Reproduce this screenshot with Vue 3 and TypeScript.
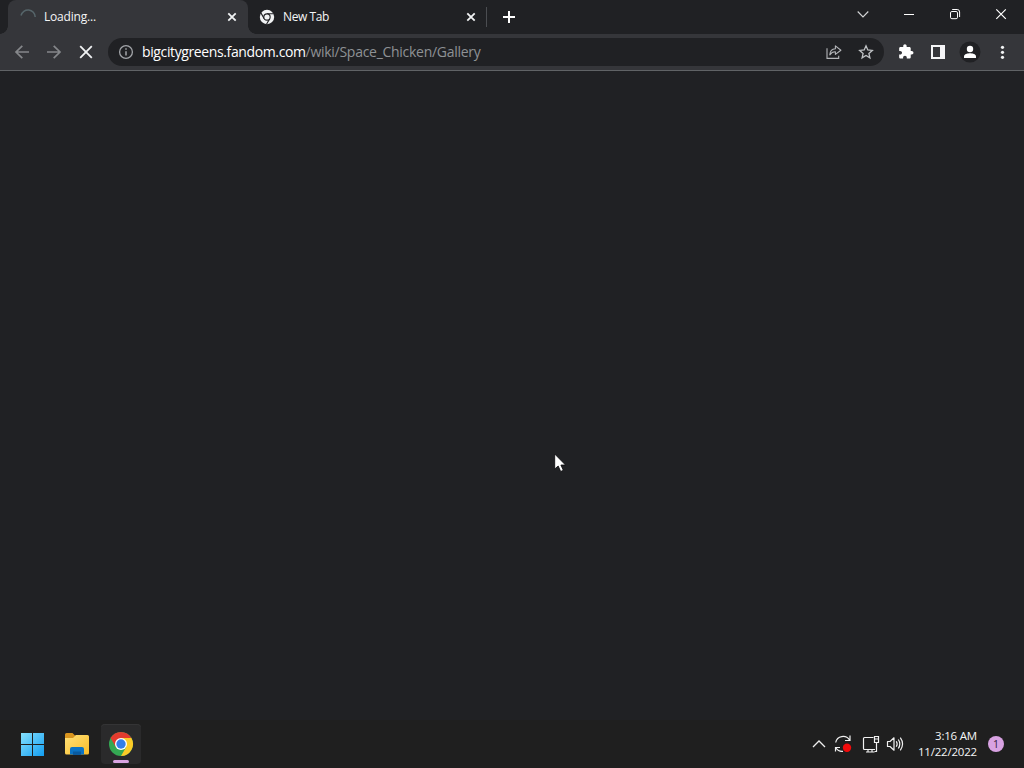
<script setup lang="ts">
import { ref } from 'vue'

interface Tab {
  title: string
  loading: boolean
}

const tabs = ref<Tab[]>([
  { title: 'Loading...', loading: true },
  { title: 'New Tab', loading: false },
])
const host = 'bigcitygreens.fandom.com'
const path = '/wiki/Space_Chicken/Gallery'
const time = '3:16 AM'
const date = '11/22/2022'
const notifications = 1
</script>

<template>
  <div class="screen">
    <header class="strip">
      <div v-for="tab in tabs" :key="tab.title" class="tab" :class="{ active: tab.loading }">
        <svg v-if="tab.loading" class="favicon" width="16" height="16" viewBox="0 0 16 16">
          <path d="M1 6.5A7.2 7.2 0 0 1 15.2 8" fill="none" stroke="#56656a" stroke-width="1.5" />
        </svg>
        <svg v-else class="favicon" width="16" height="16" viewBox="0 0 16 16">
          <circle cx="8" cy="8" r="7.2" fill="#f1f3f4" />
          <circle cx="8" cy="8" r="3.7" fill="#202124" />
          <path d="M8 4.8H14.6M5.2 9.6L1.9 3.9M10.8 9.6L7.5 15.3" stroke="#202124" stroke-width="1.1" />
          <circle cx="8" cy="8" r="2.6" fill="#f1f3f4" />
        </svg>
        <span class="title">{{ tab.title }}</span>
        <svg class="close" width="16" height="16" viewBox="0 0 16 16">
          <path d="M4.3 4.3L11.7 11.7M11.7 4.3L4.3 11.7" stroke="#f1f3f4" stroke-width="1.8" />
        </svg>
      </div>
      <div class="divider"></div>
      <svg class="plus" width="16" height="16" viewBox="0 0 16 16">
        <path d="M8 2V14M2 8H14" stroke="#fff" stroke-width="2" />
      </svg>
      <div class="window-buttons">
        <svg width="46" height="28" viewBox="0 0 46 28"><path d="M17.7 11.5L23 17L28.3 11.5" fill="none" stroke="#d4d5d7" stroke-width="1.1" /></svg>
        <svg width="46" height="28" viewBox="0 0 46 28"><path d="M18 14.5H28" stroke="#fff" /></svg>
        <svg width="46" height="28" viewBox="0 0 46 28" fill="none" stroke="#fff">
          <rect x="18.500" y="11.500" width="7" height="7.200" rx="1.400" />
          <path d="M20.200 9.500H25.200Q27.600 9.500 27.600 12V17" />
        </svg>
        <svg width="46" height="28" viewBox="0 0 46 28"><path d="M18.300 9.300L27.800 18.800M27.800 9.300L18.300 18.800" stroke="#fff" stroke-width="1.200" /></svg>
      </div>
    </header>

    <nav class="toolbar">
      <svg class="nav-icon" viewBox="0 0 32 32"><path d="M29 16H16M22.300 9.800L16 16L22.300 22.200" fill="none" stroke="#85878a" stroke-width="1.700" /></svg>
      <svg class="nav-icon" viewBox="0 0 32 32"><path d="M15 16H28M21.700 9.800L28 16L21.700 22.200" fill="none" stroke="#85878a" stroke-width="1.700" /></svg>
      <svg class="nav-icon" viewBox="0 0 32 32"><path d="M16.200 10.200L27.800 21.800M27.800 10.200L16.200 21.800" stroke="#f1f3f4" stroke-width="1.800" /></svg>
      <div class="address">
        <svg class="info" width="16" height="16" viewBox="0 0 16 16">
          <circle cx="8" cy="8" r="6.400" fill="none" stroke="#a2a5a9" stroke-width="1.300" />
          <path d="M8 7.200V11.500M8 4.300V5.800" stroke="#a2a5a9" stroke-width="1.500" />
        </svg>
        <span class="url"><span class="host">{{ host }}</span><span class="path">{{ path }}</span></span>
        <svg class="share" width="16" height="16" viewBox="0 0 16 16" fill="none" stroke="#b4b6b9" stroke-width="1.100">
          <path d="M1 4.300V14.400H12.700V11.700" />
          <path d="M3.800 10.900C4 6.900 6 4.900 9.400 4.700V1.900L14.900 6.200L9.400 10.400V7.700C6.900 7.600 5.200 8.700 3.800 10.900Z" stroke-linejoin="round" />
        </svg>
        <svg class="star" width="16" height="16" viewBox="0 0 16 16">
          <path d="M8 1.800L9.800 6L14.300 6.400L10.900 9.400L11.900 13.900L8 11.500L4.100 13.900L5.100 9.400L1.700 6.400L6.200 6Z" fill="none" stroke="#c0c3c6" stroke-width="1.300" />
        </svg>
      </div>
      <div class="actions">
        <svg width="32" height="32" viewBox="0 0 32 32">
          <path transform="translate(7.8 7.6) scale(.68)" fill="#fff" d="M20.5 11H19V7c0-1.100-.9-2-2-2h-4V3.500C13 2.120 11.880 1 10.500 1S8 2.120 8 3.500V5H4c-1.100 0-1.990.9-1.990 2v3.800H3.500c1.490 0 2.700 1.210 2.700 2.700s-1.210 2.700-2.700 2.700H2V20c0 1.100.9 2 2 2h3.800v-1.500c0-1.490 1.210-2.700 2.700-2.700s2.700 1.210 2.700 2.700V22H17c1.100 0 2-.9 2-2v-4h1.500c1.380 0 2.500-1.120 2.500-2.500S21.880 11 20.500 11z" />
        </svg>
        <svg width="32" height="32" viewBox="0 0 32 32"><path d="M9 9H23V23H9ZM11 11V21H18V11Z" fill="#f5f5f7" fill-rule="evenodd" /></svg>
        <svg width="32" height="32" viewBox="0 0 32 32">
          <circle cx="16" cy="16" r="10.500" fill="#202124" />
          <circle cx="16" cy="13" r="3.200" fill="#fff" />
          <path d="M10 22V20.300C10 18 13.800 17.200 16 17.200S22 18 22 20.300V22Z" fill="#fff" />
        </svg>
        <svg width="32" height="32" viewBox="0 0 32 32" fill="#f1f3f4"><circle cx="16.500" cy="11.300" r="1.600" /><circle cx="16.500" cy="16.300" r="1.600" /><circle cx="16.500" cy="21.300" r="1.600" /></svg>
      </div>
    </nav>

    <main class="page"></main>

    <footer class="taskbar">
      <svg class="app" viewBox="0 0 40 40">
        <defs>
          <linearGradient id="tile" gradientUnits="userSpaceOnUse" x1="8" y1="8" x2="32" y2="32"><stop stop-color="#8be4ff" /><stop offset="1" stop-color="#129df0" /></linearGradient>
        </defs>
        <path d="M9 9H20V20H9ZM21 9H32V20H21ZM9 21H20V32H9ZM21 21H32V32H21Z" fill="url(#tile)" />
      </svg>
      <svg class="app" viewBox="0 0 40 40">
        <defs>
          <linearGradient id="folder" x1="0" y1="0" x2="1" y2="1"><stop stop-color="#ffe179" /><stop offset="1" stop-color="#f9bc28" /></linearGradient>
        </defs>
        <path d="M9 10.500Q9 9 10.500 9H16.500L19 11.500H30V19H9Z" fill="#d9951e" />
        <path d="M9 14H17L20 11H31.500Q33 11 33 12.500V29Q33 30.500 31.500 30.500H10.500Q9 30.500 9 29Z" fill="url(#folder)" />
        <path d="M14 30.500V25Q14 23 16 23H26Q28 23 28 25V30.500Z" fill="#0b73c4" />
        <path d="M17 31V27.500H25V31Z" fill="#0a5a9e" />
      </svg>
      <div class="app running">
        <svg width="40" height="40" viewBox="0 0 40 40">
          <circle cx="20" cy="20" r="12" fill="#34a853" />
          <path d="M20 20L9.600 14A12 12 0 0 1 30.400 14Z" fill="#e33b2e" />
          <path d="M20 14H30.400A12 12 0 0 1 20 32L25.200 23Z" fill="#fccb27" />
          <path d="M9.600 14L14.800 23L20 20V14L12 12Z" fill="#e33b2e" />
          <circle cx="20" cy="20" r="6" fill="#fff" />
          <circle cx="20" cy="20" r="4.700" fill="#347ee8" />
        </svg>
        <span class="indicator"></span>
      </div>

      <div class="tray">
        <svg width="24" height="24" viewBox="0 0 24 24"><path d="M6 15L12 9L18 15" fill="none" stroke="#eee" stroke-width="1.300" /></svg>
        <svg width="24" height="24" viewBox="0 0 24 24">
          <path d="M4.700 10.500C6 3.600 15 2.500 18.500 8M19 3.500V8.500H14M4.500 19.500V15.500H9M5 16C6.500 18.500 9 19.600 12 19.300" fill="none" stroke="#f1f1f1" stroke-width="1.200" />
          <circle cx="16" cy="15.800" r="4.200" fill="#f20b0b" />
        </svg>
        <svg width="28" height="24" viewBox="0 0 28 24" fill="none" stroke="#f1f1f1" stroke-width="1.200">
          <path d="M18.500 5.500H9.500Q8.500 5.500 8.500 6.500V16.500Q8.500 17.500 9.500 17.500H20M13 17.500V20M17 17.500V20M11 20H19.500" />
          <path d="M19.500 4.500H23.500V10.500H19.500ZM21.500 10.500V19.500H19.500M19.500 7H23.500" />
        </svg>
        <svg width="24" height="24" viewBox="0 0 24 24" fill="none" stroke="#f1f1f1" stroke-width="1.200">
          <g transform="translate(1 0)">
            <path d="M3.500 9.500H6L10 5.800V18.200L6 14.500H3.500Z" stroke-linejoin="round" />
            <path d="M12.300 9.300Q14 12 12.300 14.700M14.300 7.500Q17.300 12 14.300 16.500M16.300 5.700Q20.800 12 16.300 18.300" />
          </g>
        </svg>
      </div>
      <div class="clock"><span class="time">{{ time }}</span><span class="date">{{ date }}</span></div>
      <span class="badge">{{ notifications }}</span>
    </footer>

    <svg class="cursor" width="14" height="20" viewBox="0 0 14 20">
      <path d="M.7 1V16L4.200 13L6.700 18.500L9.300 17.300L6.900 12H11.500Z" fill="#fff" stroke="#08080a" stroke-width=".8" />
    </svg>
  </div>
</template>

<style>
body {
  margin: 0;
  background: #202124;
}
</style>

<style scoped>
.screen {
  position: relative;
  display: flex;
  flex-direction: column;
  width: 1024px;
  height: 768px;
  overflow: hidden;
  background: #202124;
  font-family: "Open Sans", "Noto Sans", sans-serif;
  color: #f4f5f6;
}
svg {
  display: block;
  flex: none;
}
.strip {
  display: flex;
  height: 34px;
  padding-left: 8px;
  box-sizing: border-box;
}
.tab {
  position: relative;
  display: flex;
  align-items: center;
  box-sizing: border-box;
  width: 238px;
  height: 34px;
  padding: 0 7px 0 11px;
}
.tab.active {
  width: 240px;
  padding: 0 8px 0 12px;
  background: #35363a;
  border-radius: 8px 8px 0 0;
}
.tab.active::before,
.tab.active::after {
  content: "";
  position: absolute;
  bottom: 0;
  width: 8px;
  height: 8px;
}
.tab.active::before {
  left: -8px;
  background: radial-gradient(circle at 0 0, transparent 7.5px, #35363a 8px);
}
.tab.active::after {
  right: -8px;
  background: radial-gradient(circle at 100% 0, transparent 7.5px, #35363a 8px);
}
.title {
  flex: 1;
  margin-left: 8px;
  font-size: 12px;
  line-height: 16px;
  letter-spacing: -0.2px;
}
.tab:not(.active) .title {
  letter-spacing: -0.4px;
}
.divider {
  width: 1px;
  height: 20px;
  margin-top: 7px;
  background: #4b4d51;
}
.plus {
  margin: 9px 0 0 14px;
}
.window-buttons {
  display: flex;
  margin-left: auto;
}
.toolbar {
  display: flex;
  align-items: center;
  box-sizing: border-box;
  height: 37px;
  background: #35363a;
  border-bottom: 1px solid #606366;
}
.nav-icon {
  width: 32px;
  height: 32px;
}
.address {
  display: flex;
  align-items: center;
  box-sizing: border-box;
  width: 776px;
  height: 28px;
  margin-left: 12px;
  padding: 0 10px;
  border-radius: 14px;
  background: #202124;
}
.url {
  flex: 1;
  margin-left: 8px;
  font-size: 14px;
  line-height: 20px;
  white-space: nowrap;
}
.host {
  color: #fff;
  letter-spacing: -0.38px;
}
.path {
  color: #8e9195;
  letter-spacing: -0.28px;
}
.share {
  margin-right: 16px;
}
.actions {
  display: flex;
  margin-left: 6px;
}
.page {
  flex: 1;
}
.taskbar {
  display: flex;
  align-items: center;
  box-sizing: border-box;
  height: 48px;
  padding: 0 20px 0 12px;
  background: #1f1f1f;
}
.app {
  width: 40px;
  height: 40px;
  margin-right: 4px;
}
.running {
  position: relative;
  box-sizing: border-box;
  border-radius: 4px;
  margin-left: 1px;
  background: #2a2a2b;
  box-shadow: inset 0 1px #343435;
}
.indicator {
  position: absolute;
  left: 12px;
  bottom: 1px;
  width: 16px;
  height: 3px;
  border-radius: 2px;
  background: #d9a4e2;
}
.tray {
  display: flex;
  margin-left: auto;
}
.clock {
  display: flex;
  flex-direction: column;
  align-items: flex-end;
  width: 70px;
  font-size: 11.5px;
  line-height: 16px;
  letter-spacing: -0.2px;
}
.badge {
  width: 16px;
  height: 16px;
  margin-left: 11px;
  border-radius: 50%;
  background: #d8a2e2;
  color: #33203a;
  font-size: 10.5px;
  line-height: 16px;
  text-align: center;
}
.cursor {
  position: absolute;
  left: 554px;
  top: 453px;
}
</style>
